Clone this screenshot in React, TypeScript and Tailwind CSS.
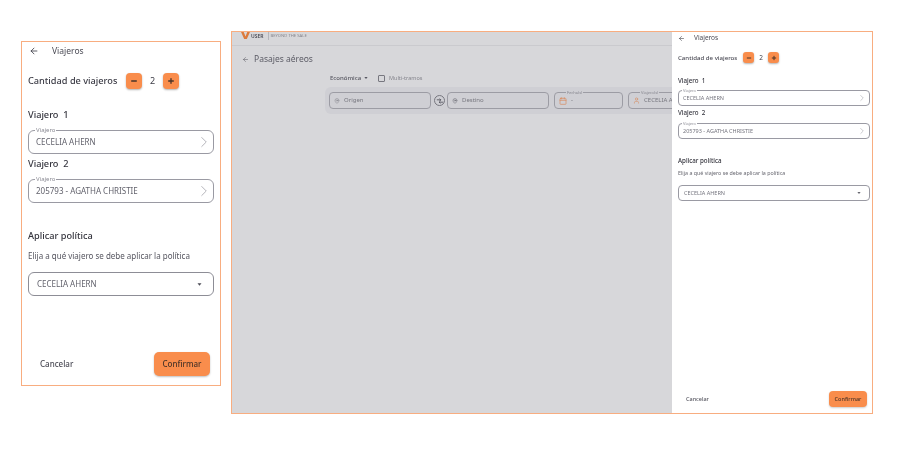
import { ArrowLeft, Calendar, ChevronRight, MapPin, Minus, Plus, User } from "lucide-react";

const font = { fontFamily: '"Noto Sans", sans-serif' };

function CountButton({ kind, small }: { kind: "minus" | "plus"; small?: boolean }) {
  const Icon = kind === "minus" ? Minus : Plus;
  return (
    <div
      className={
        small
          ? "w-[11px] h-[11px] rounded-[3px] bg-[#f98d4c] shadow-[0_1px_2px_rgba(0,0,0,0.3)] flex items-center justify-center"
          : "w-4 h-4 rounded-[4px] bg-[#f98d4c] shadow-[0_1px_2px_rgba(0,0,0,0.3)] flex items-center justify-center"
      }
    >
      <Icon size={small ? 6 : 8} strokeWidth={4} className="text-[#4a3428]" />
    </div>
  );
}

function Field({ label, value, small }: { label: string; value: string; small?: boolean }) {
  if (small) {
    return (
      <div className="relative h-4 rounded-[4px] border border-[#9a9aa3] flex items-center justify-between pl-[4px] pr-[2px]">
        <span className="absolute left-[3px] top-[-3px] bg-white px-[1px] text-[4px] leading-[5px] text-[#8b8b94]">{label}</span>
        <span className="pt-[1px] text-[5.5px] text-[#75757f]">{value}</span>
        <ChevronRight size={10} strokeWidth={1.4} className="text-[#a5a5ad]" />
      </div>
    );
  }
  return (
    <div className="relative h-6 rounded-[6px] border border-[#9a9aa3] flex items-center justify-between pl-[7px]">
      <span className="absolute left-[6px] top-[-4px] bg-white px-[1px] text-[6px] leading-[7px] text-[#8b8b94]">{label}</span>
      <span className="text-[8px] text-[#63636d]">{value}</span>
      <ChevronRight size={18} strokeWidth={1.1} className="text-[#a5a5ad]" />
    </div>
  );
}

function Caret({ className }: { className: string }) {
  return (
    <svg viewBox="0 0 10 5" className={className}>
      <path d="M1 0h8L5 5z" fill="currentColor" />
    </svg>
  );
}

function LeftPanel() {
  return (
    <div className="w-[200px] h-[345px] mt-[10px] shrink-0 border border-[#f8ad80] bg-white flex flex-col">
      <div className="h-[18px] flex items-center pl-[7px]">
        <ArrowLeft size={10} className="text-[#3f3f48]" />
        <span className="ml-[13px] text-[8.5px] text-[#4b4b55]">Viajeros</span>
      </div>
      <div className="mt-[13px] h-4 flex items-center pl-[6px]">
        <span className="w-[98px] text-[9.2px] font-medium text-[#3c3c46] whitespace-nowrap">Cantidad de viajeros</span>
        <CountButton kind="minus" />
        <span className="w-[21px] text-center text-[9px] text-[#3c3c46]">2</span>
        <CountButton kind="plus" />
      </div>
      <div className="mt-[18px] pl-[6px] pr-[6px] flex flex-col">
        <div className="h-[16px] flex items-center text-[9.2px] font-medium text-[#33333c] whitespace-pre">Viajero  1</div>
        <div className="mt-[7px]">
          <Field label="Viajero" value="CECELIA AHERN" />
        </div>
        <div className="mt-[1px] h-[18px] flex items-center text-[9.2px] font-medium text-[#33333c] whitespace-pre">Viajero  2</div>
        <div className="mt-[6px]">
          <Field label="Viajero" value="205793 - AGATHA CHRISTIE" />
        </div>
        <div className="mt-[25px] h-4 flex items-center text-[9.2px] font-medium text-[#33333c]">Aplicar política</div>
        <div className="mt-[4px] h-4 flex items-center text-[8px] text-[#55555f] whitespace-nowrap">Elija a qué viajero se debe aplicar la política</div>
        <div className="mt-[8px] h-6 rounded-[6px] border border-[#8d8d96] flex items-center justify-between pl-[8px] pr-[11px]">
          <span className="text-[8px] text-[#63636d]">CECELIA AHERN</span>
          <Caret className="w-[5px] h-[3px] text-[#4b4b55]" />
        </div>
      </div>
      <div className="mt-auto mb-[9px] flex items-center justify-between pl-[18px] pr-[10px]">
        <span className="text-[8px] font-medium text-[#4b4b55]">Cancelar</span>
        <div className="w-14 h-6 rounded-[5px] bg-[#f98d4c] shadow-[0_1px_2px_rgba(0,0,0,0.25)] flex items-center justify-center text-[8px] font-medium text-[#4a3428]">
          Confirmar
        </div>
      </div>
    </div>
  );
}

function SearchField({ icon, label, value, className }: { icon: React.ReactNode; label?: string; value: string; className: string }) {
  return (
    <div className={`relative h-[17px] rounded-[4px] border border-[#9c9ca4] flex items-center gap-[4px] pl-[4px] ${className}`}>
      {label && <span className="absolute left-[11px] top-[-3px] bg-[#cfcfd4] px-[1px] text-[4px] leading-[5px] text-[#85858d]">{label}</span>}
      {icon}
      <span className="text-[6px] text-[#77777f] whitespace-nowrap">{value}</span>
    </div>
  );
}

function Backdrop() {
  return (
    <div className="w-[440px] shrink-0 bg-[#d7d7da] overflow-hidden flex flex-col">
      <div className="h-[14px] border-b border-[#cacace] flex items-start pl-[9px]">
        <svg viewBox="0 0 10 9" className="w-[9px] h-[8px]">
          <path d="M0 0h3l2 5 2-5h3L6.5 8h-3z" fill="#dc7a3c" />
        </svg>
        <span className="ml-[1px] text-[5px] leading-[8px] font-semibold text-[#4b4b55]">USER</span>
        <span className="ml-[4px] border-l border-[#b5b5bb] pl-[2px] text-[4.2px] leading-[8px] text-[#85858d] whitespace-nowrap">BEYOND THE SALE</span>
      </div>
      <div className="mt-[5px] h-4 flex items-center pl-[10px]">
        <ArrowLeft size={7} className="text-[#66666f]" />
        <span className="ml-[5px] text-[8.5px] text-[#5c5c66]">Pasajes aéreos</span>
      </div>
      <div className="mt-[5px] h-[12px] flex items-center pl-[98px]">
        <span className="text-[6px] font-medium text-[#55555f]">Económica</span>
        <Caret className="ml-[3px] w-[4px] h-[2px] text-[#55555f]" />
        <div className="ml-[10px] w-[7px] h-[7px] rounded-[1px] border border-[#77777f]" />
        <span className="ml-[4px] text-[5.5px] text-[#85858d] whitespace-nowrap">Multi-tramos</span>
      </div>
      <div className="mt-[3px] ml-[93px] h-[27px] rounded-l-[6px] bg-[#cfcfd4] flex items-center pl-[4px]">
        <SearchField icon={<MapPin size={6} className="text-[#85858d]" />} value="Origen" className="w-[102px] shrink-0" />
        <div className="ml-[3px] w-[11px] h-[11px] shrink-0 rounded-full border border-[#77777f] flex items-center justify-center">
          <svg viewBox="0 0 10 10" className="w-[8px] h-[8px] text-[#4b4b55]" fill="none" stroke="currentColor" strokeWidth="1">
            <path d="M1 3.5h5M4.5 2l1.5 1.5L4.5 5M9 6.5H4M5.5 5L4 6.5 5.5 8" />
          </svg>
        </div>
        <SearchField icon={<MapPin size={6} className="text-[#66666f]" />} value="Destino" className="ml-[2px] w-[102px] shrink-0" />
        <SearchField icon={<Calendar size={8} className="text-[#d98a5c]" />} label="Fecha(s)" value="-" className="ml-[5px] w-[69px] shrink-0" />
        <SearchField icon={<User size={7} className="text-[#d98a5c]" />} label="Viajero(s)" value="CECELIA AHERN" className="ml-[5px] w-[90px] shrink-0" />
      </div>
    </div>
  );
}

function Drawer() {
  return (
    <div className="flex-1 bg-white flex flex-col">
      <div className="h-[12px] flex items-center pl-[6px]">
        <ArrowLeft size={7} className="text-[#3f3f48]" />
        <span className="ml-[9px] text-[6.5px] text-[#4b4b55]">Viajeros</span>
      </div>
      <div className="mt-[8px] h-[11px] flex items-center pl-[6px]">
        <span className="w-[65px] text-[6.1px] font-medium text-[#4b4b55] whitespace-nowrap">Cantidad de viajeros</span>
        <CountButton kind="minus" small />
        <span className="w-[14px] text-center text-[6.5px] text-[#3c3c46]">2</span>
        <CountButton kind="plus" small />
      </div>
      <div className="mt-[12px] pl-[6px] pr-[2px] flex flex-col">
        <div className="h-[12px] flex items-center text-[6.2px] font-medium text-[#33333c] whitespace-pre">Viajero  1</div>
        <div className="mt-[3px]">
          <Field small label="Viajero" value="CECELIA AHERN" />
        </div>
        <div className="h-[17px] pb-[3px] flex items-center text-[6.2px] font-medium text-[#33333c] whitespace-pre">Viajero  2</div>
        <Field small label="Viajero" value="205793 - AGATHA CHRISTIE" />
        <div className="mt-[16px] h-[12px] flex items-center text-[6.2px] font-medium text-[#33333c]">Aplicar política</div>
        <div className="mt-[1px] h-[12px] flex items-center text-[5.3px] text-[#66666f] whitespace-nowrap">Elija a qué viajero se debe aplicar la política</div>
        <div className="mt-[5px] h-4 rounded-[4px] border border-[#9a9aa3] flex items-center justify-between pl-[5px] pr-[8px]">
          <span className="text-[5.5px] text-[#75757f]">CECELIA AHERN</span>
          <Caret className="w-[4px] h-[2px] text-[#66666f]" />
        </div>
      </div>
      <div className="mt-auto mb-[6px] flex items-center justify-between pl-[14px] pr-[5px]">
        <span className="text-[5.5px] font-medium text-[#55555f]">Cancelar</span>
        <div className="w-[38px] h-4 rounded-[4px] bg-[#f98d4c] shadow-[0_1px_2px_rgba(0,0,0,0.2)] flex items-center justify-center text-[5.5px] font-medium text-[#4a3428]">
          Confirmar
        </div>
      </div>
    </div>
  );
}

export default function App() {
  return (
    <div className="w-[898px] h-[450px] bg-white overflow-hidden flex items-start pt-[31px] pl-[21px] blur-[0.4px]" style={font}>
      <LeftPanel />
      <div className="ml-[10px] w-[642px] h-[383px] shrink-0 border border-[#f8ad80] flex">
        <Backdrop />
        <Drawer />
      </div>
    </div>
  );
}
